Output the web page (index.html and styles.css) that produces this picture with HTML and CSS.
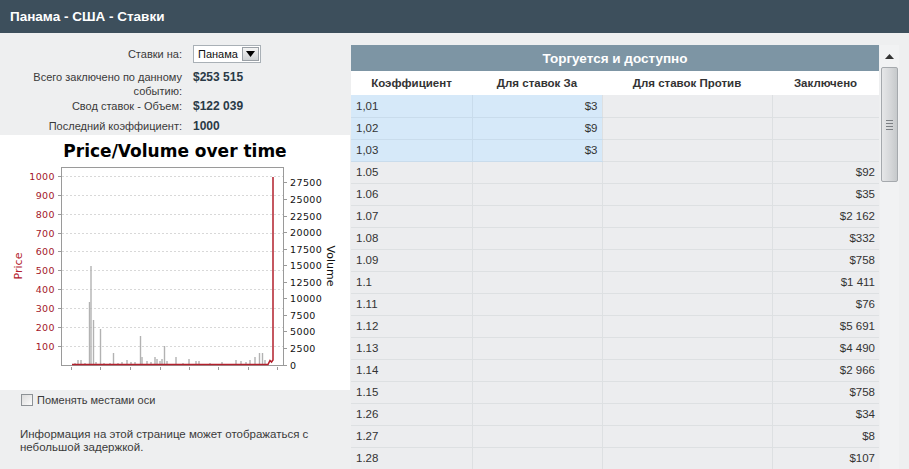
FILE: index.html
```html
<!DOCTYPE html>
<html lang="ru">
<head>
<meta charset="utf-8">
<title>Панама - США - Ставки</title>
<link rel="stylesheet" href="styles.css">
</head>
<body>
<div class="topbar">Панама - США - Ставки</div>
<div class="main">
  <div class="left">
    <div class="info">
      <div class="row r-select">
        <div class="lbl">Ставки на:</div>
        <div class="select"><span class="sel-text">Панама</span><span class="sel-btn"><svg width="9" height="6" viewBox="0 0 9 6"><path d="M0 0H9L4.5 6Z" fill="#000"/></svg></span></div>
      </div>
      <div class="row r-total">
        <div class="lbl">Всего заключено по данному<br>событию:</div>
        <div class="val">$253 515</div>
      </div>
      <div class="row r-sum">
        <div class="lbl">Свод ставок - Объем:</div>
        <div class="val">$122 039</div>
      </div>
      <div class="row r-last">
        <div class="lbl">Последний коэффициент:</div>
        <div class="val">1000</div>
      </div>
    </div>
    <div class="chart">
      <svg width="350" height="255" viewBox="0 0 350 255" class="chart-svg">
        <text x="175" y="22" class="c-title" text-anchor="middle">Price/Volume over time</text>
        <g class="grid">
          <line x1="62" x2="283" y1="41.5" y2="41.5"/>
          <line x1="62" x2="283" y1="60.5" y2="60.5"/>
          <line x1="62" x2="283" y1="79.5" y2="79.5"/>
          <line x1="62" x2="283" y1="98.5" y2="98.5"/>
          <line x1="62" x2="283" y1="116.5" y2="116.5"/>
          <line x1="62" x2="283" y1="135.5" y2="135.5"/>
          <line x1="62" x2="283" y1="154.5" y2="154.5"/>
          <line x1="62" x2="283" y1="173.5" y2="173.5"/>
          <line x1="62" x2="283" y1="192.5" y2="192.5"/>
          <line x1="62" x2="283" y1="211.5" y2="211.5"/>
        </g>
        <g class="bars">
          <line x1="75" x2="75" y1="230" y2="228"/>
          <line x1="78" x2="78" y1="230" y2="225"/>
          <line x1="81" x2="81" y1="230" y2="225"/>
          <line x1="85" x2="85" y1="230" y2="228"/>
          <line x1="89.5" x2="89.5" y1="230" y2="167"/>
          <line x1="91" x2="91" y1="230" y2="131"/>
          <line x1="93.5" x2="93.5" y1="230" y2="185"/>
          <line x1="96" x2="96" y1="230" y2="227"/>
          <line x1="100.5" x2="100.5" y1="230" y2="194"/>
          <line x1="104" x2="104" y1="230" y2="228"/>
          <line x1="110" x2="110" y1="230" y2="228"/>
          <line x1="113.5" x2="113.5" y1="230" y2="218"/>
          <line x1="118" x2="118" y1="230" y2="228"/>
          <line x1="122" x2="122" y1="230" y2="227"/>
          <line x1="127" x2="127" y1="230" y2="225"/>
          <line x1="131" x2="131" y1="230" y2="227"/>
          <line x1="135" x2="135" y1="230" y2="227"/>
          <line x1="140.5" x2="140.5" y1="230" y2="201"/>
          <line x1="142" x2="142" y1="230" y2="222"/>
          <line x1="147" x2="147" y1="230" y2="226"/>
          <line x1="151" x2="151" y1="230" y2="227"/>
          <line x1="155" x2="155" y1="230" y2="222"/>
          <line x1="157" x2="157" y1="230" y2="224"/>
          <line x1="160" x2="160" y1="230" y2="226"/>
          <line x1="162" x2="162" y1="230" y2="224"/>
          <line x1="164.5" x2="164.5" y1="230" y2="211"/>
          <line x1="167" x2="167" y1="230" y2="226"/>
          <line x1="176" x2="176" y1="230" y2="222"/>
          <line x1="183" x2="183" y1="230" y2="228"/>
          <line x1="189" x2="189" y1="230" y2="224"/>
          <line x1="196" x2="196" y1="230" y2="226"/>
          <line x1="199" x2="199" y1="230" y2="226"/>
          <line x1="210" x2="210" y1="230" y2="228"/>
          <line x1="222" x2="222" y1="230" y2="227"/>
          <line x1="236" x2="236" y1="230" y2="225"/>
          <line x1="241" x2="241" y1="230" y2="226"/>
          <line x1="246" x2="246" y1="230" y2="227"/>
          <line x1="250" x2="250" y1="230" y2="225"/>
          <line x1="255" x2="255" y1="230" y2="222"/>
          <line x1="259.5" x2="259.5" y1="230" y2="218"/>
          <line x1="262.5" x2="262.5" y1="230" y2="218"/>
          <line x1="265" x2="265" y1="230" y2="225"/>
        </g>
        <rect x="61.5" y="32.5" width="222" height="198" class="frame"/>
        <g class="ticks">
          <line x1="58" x2="61" y1="41.5" y2="41.5"/>
          <line x1="58" x2="61" y1="60.5" y2="60.5"/>
          <line x1="58" x2="61" y1="79.5" y2="79.5"/>
          <line x1="58" x2="61" y1="98.5" y2="98.5"/>
          <line x1="58" x2="61" y1="116.5" y2="116.5"/>
          <line x1="58" x2="61" y1="135.5" y2="135.5"/>
          <line x1="58" x2="61" y1="154.5" y2="154.5"/>
          <line x1="58" x2="61" y1="173.5" y2="173.5"/>
          <line x1="58" x2="61" y1="192.5" y2="192.5"/>
          <line x1="58" x2="61" y1="211.5" y2="211.5"/>
          <line x1="284" x2="287" y1="47.5" y2="47.5"/>
          <line x1="284" x2="287" y1="64.5" y2="64.5"/>
          <line x1="284" x2="287" y1="81.5" y2="81.5"/>
          <line x1="284" x2="287" y1="97.5" y2="97.5"/>
          <line x1="284" x2="287" y1="114.5" y2="114.5"/>
          <line x1="284" x2="287" y1="130.5" y2="130.5"/>
          <line x1="284" x2="287" y1="147.5" y2="147.5"/>
          <line x1="284" x2="287" y1="163.5" y2="163.5"/>
          <line x1="284" x2="287" y1="180.5" y2="180.5"/>
          <line x1="284" x2="287" y1="196.5" y2="196.5"/>
          <line x1="284" x2="287" y1="213.5" y2="213.5"/>
          <line x1="284" x2="287" y1="230.5" y2="230.5"/>
          <line x1="71.5" x2="71.5" y1="232" y2="235"/>
          <line x1="100.5" x2="100.5" y1="232" y2="235"/>
          <line x1="130.5" x2="130.5" y1="232" y2="235"/>
          <line x1="160.5" x2="160.5" y1="232" y2="235"/>
          <line x1="189.5" x2="189.5" y1="232" y2="235"/>
          <line x1="218.5" x2="218.5" y1="232" y2="235"/>
          <line x1="248.5" x2="248.5" y1="232" y2="235"/>
          <line x1="277.5" x2="277.5" y1="232" y2="235"/>
        </g>
        <polyline class="price" points="72,229.5 268,229.5 270,225.5 271.5,227 273,225 273,42"/>
        <g class="lt" text-anchor="end">
          <text x="55" y="45">1000</text>
          <text x="55" y="64">900</text>
          <text x="55" y="83">800</text>
          <text x="55" y="102">700</text>
          <text x="55" y="120">600</text>
          <text x="55" y="139">500</text>
          <text x="55" y="158">400</text>
          <text x="55" y="177">300</text>
          <text x="55" y="196">200</text>
          <text x="55" y="215">100</text>
        </g>
        <g class="rt">
          <text x="290" y="51">27500</text>
          <text x="290" y="68">25000</text>
          <text x="290" y="85">22500</text>
          <text x="290" y="101">20000</text>
          <text x="290" y="118">17500</text>
          <text x="290" y="134">15000</text>
          <text x="290" y="151">12500</text>
          <text x="290" y="167">10000</text>
          <text x="290" y="184">7500</text>
          <text x="290" y="200">5000</text>
          <text x="290" y="217">2500</text>
          <text x="290" y="234">0</text>
        </g>
        <text class="ax-price" transform="translate(22 131) rotate(-90)" text-anchor="middle">Price</text>
        <text class="ax-vol" transform="translate(327 131) rotate(90)" text-anchor="middle">Volume</text>
      </svg>
    </div>
    <label class="swap"><span class="cb"></span><span>Поменять местами оси</span></label>
    <p class="note">Информация на этой странице может отображаться с небольшой задержкой.</p>
  </div>
  <div class="right">
    <table class="odds">
      <colgroup><col class="c1"><col class="c2"><col class="c3"><col class="c4"></colgroup>
      <thead>
        <tr class="t-title"><th colspan="4">Торгуется и доступно</th></tr>
        <tr class="t-head"><th>Коэффициент</th><th>Для ставок За</th><th>Для ставок Против</th><th>Заключено</th></tr>
      </thead>
      <tbody>
        <tr class="hl"><td>1,01</td><td class="num">$3</td><td></td><td></td></tr>
        <tr class="hl"><td>1,02</td><td class="num">$9</td><td></td><td></td></tr>
        <tr class="hl"><td>1,03</td><td class="num">$3</td><td></td><td></td></tr>
        <tr><td>1.05</td><td></td><td></td><td class="num">$92</td></tr>
        <tr><td>1.06</td><td></td><td></td><td class="num">$35</td></tr>
        <tr><td>1.07</td><td></td><td></td><td class="num">$2 162</td></tr>
        <tr><td>1.08</td><td></td><td></td><td class="num">$332</td></tr>
        <tr><td>1.09</td><td></td><td></td><td class="num">$758</td></tr>
        <tr><td>1.1</td><td></td><td></td><td class="num">$1 411</td></tr>
        <tr><td>1.11</td><td></td><td></td><td class="num">$76</td></tr>
        <tr><td>1.12</td><td></td><td></td><td class="num">$5 691</td></tr>
        <tr><td>1.13</td><td></td><td></td><td class="num">$4 490</td></tr>
        <tr><td>1.14</td><td></td><td></td><td class="num">$2 966</td></tr>
        <tr><td>1.15</td><td></td><td></td><td class="num">$758</td></tr>
        <tr><td>1.26</td><td></td><td></td><td class="num">$34</td></tr>
        <tr><td>1.27</td><td></td><td></td><td class="num">$8</td></tr>
        <tr><td>1.28</td><td></td><td></td><td class="num">$107</td></tr>
      </tbody>
    </table>
  </div>
  <div class="scrollbar">
    <div class="sb-up"><svg width="9" height="5" viewBox="0 0 9 5"><path d="M0 5H9L4.5 0Z" fill="#333"/></svg></div>
    <div class="sb-thumb"><span></span><span></span><span></span><span></span></div>
  </div>
</div>
</body>
</html>
```

FILE: styles.css
```css
* { box-sizing: border-box; }
html, body { margin: 0; padding: 0; }
body {
  width: 909px;
  height: 469px;
  overflow: hidden;
  background: #eeeff0;
  font-family: Tahoma, "Liberation Sans", Arial, sans-serif;
  font-size: 11.5px;
  color: #333;
}
.topbar {
  height: 33px;
  background: #3d4f5c;
  color: #fff;
  font-weight: bold;
  font-size: 13.5px;
  line-height: 34px;
  padding-left: 10px;
}
.main { display: flex; align-items: flex-start; }
.left { width: 350px; flex: none; }
.info { padding-top: 12px; }
.row { display: flex; line-height: 14px; }
.lbl { width: 182px; text-align: right; color: #3a3a3a; font-size: 11px; }
.val { margin-left: 11px; font-weight: bold; color: #2a3a46; font-size: 12px; }
.r-select { height: 18px; align-items: center; }
.r-total { margin-top: 7px; }
.r-sum { margin-top: 1px; }
.r-last { margin-top: 6px; }
.select {
  margin-left: 11px;
  width: 68px;
  height: 18px;
  background: #fff;
  border: 1px solid #a9b0b6;
  display: flex;
  align-items: center;
  justify-content: space-between;
  padding: 1px;
}
.sel-text { padding-left: 3px; color: #111; font-size: 11px; }
.sel-btn {
  width: 17px;
  height: 14px;
  border: 1px solid #9aa0a6;
  background: linear-gradient(#f4f4f4, #cfd2d4);
  display: flex;
  align-items: center;
  justify-content: center;
}
.chart { margin-top: 2px; height: 255px; background: #fff; }
.chart-svg { display: block; font-family: "DejaVu Sans", sans-serif; }
.c-title { font-size: 17px; font-weight: bold; fill: #000; }
.grid line { stroke: #d8d8d8; stroke-width: 1; stroke-dasharray: 2 2; }
.bars line { stroke: #b2b2b2; stroke-width: 1.4; }
.frame { fill: none; stroke: #9a9a9a; stroke-width: 1; }
.ticks line { stroke: #9a9a9a; stroke-width: 1; }
.price { fill: none; stroke: #b3202c; stroke-width: 1.5; }
.lt text { font-size: 9.5px; fill: #a3162a; letter-spacing: 0.4px; }
.rt text { font-size: 9.5px; fill: #111; letter-spacing: 0.4px; }
.ax-price { font-size: 11px; fill: #b3202c; }
.ax-vol { font-size: 11px; fill: #111; }
.swap {
  display: flex;
  align-items: center;
  margin-top: 3px;
  padding-left: 21px;
  height: 13px;
  color: #3a3a3a;
  font-size: 11px;
}
.cb {
  width: 12px;
  height: 12px;
  border: 1px solid #8d9296;
  background: linear-gradient(135deg, #dcdcdc, #fbfbfb);
  margin-right: 4px;
}
.note {
  margin: 22px 0 0 0;
  padding: 0 20px;
  line-height: 13px;
  color: #3a3a3a;
}
.right { margin-left: 1px; margin-top: 12px; width: 528px; flex: none; }
.odds { border-collapse: collapse; width: 528px; table-layout: fixed; }
.c1 { width: 121px; }
.c2 { width: 130px; }
.c3 { width: 170px; }
.c4 { width: 107px; }
.t-title th {
  height: 26px;
  background: #7d95a4;
  color: #fff;
  font-weight: bold;
  font-size: 13.5px;
  text-align: center;
}
.t-head th {
  height: 24px;
  background: #fff;
  color: #333;
  font-weight: bold;
  text-align: center;
}
.odds td {
  height: 22px;
  padding: 0 4px 0 5px;
  background: #ecedef;
  border-bottom: 1px solid #dde0e2;
  border-left: 1px solid #dde0e2;
  color: #333;
}
.odds td:first-child { border-left: none; }
.odds td.num { text-align: right; }
.odds tr.hl td:nth-child(1), .odds tr.hl td:nth-child(2) {
  background: #d6e9f9;
  border-bottom-color: #c9dcec;
  border-left-color: #c9dcec;
}
.scrollbar {
  margin-left: 1px;
  margin-top: 12px;
  width: 19px;
  height: 424px;
  background: #f1f2f3;
  display: flex;
  flex-direction: column;
  align-items: center;
}
.sb-up { height: 22px; display: flex; align-items: center; justify-content: center; width: 100%; }
.sb-thumb {
  width: 17px;
  height: 115px;
  border: 1px solid #a5a9ad;
  border-radius: 2px;
  background: linear-gradient(90deg, #e6e7e8, #d4d6d8 60%, #c6c9cb);
  display: flex;
  flex-direction: column;
  justify-content: center;
  align-items: center;
  gap: 2px;
}
.sb-thumb span { width: 7px; height: 1px; background: #7c8084; }
```
